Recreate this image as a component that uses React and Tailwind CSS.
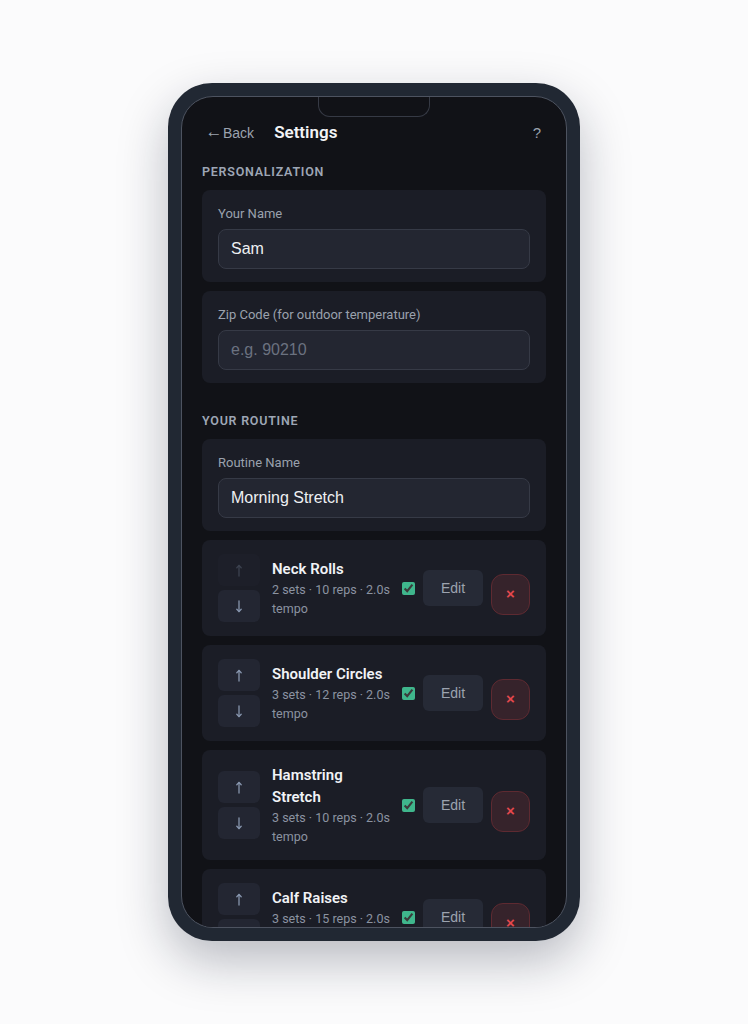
import { useState } from "react";

const exercises = [
  { id: 1, name: "Neck Rolls", sets: 2, reps: 10, tempo: "2.0" },
  { id: 2, name: "Shoulder Circles", sets: 3, reps: 12, tempo: "2.0" },
  { id: 3, name: "Hamstring Stretch", sets: 3, reps: 10, tempo: "2.0" },
  { id: 4, name: "Calf Raises", sets: 3, reps: 15, tempo: "2.0" },
];

const ArrowIcon = ({ down }) => (
  <svg width="8" height="13" viewBox="0 0 8 13" fill="none" stroke="currentColor" strokeWidth="1.3" strokeLinecap="round" strokeLinejoin="round">
    {down ? (
      <>
        <path d="M4 1v10.5" />
        <path d="M1.8 9.2 4 11.6l2.2-2.4" />
      </>
    ) : (
      <>
        <path d="M4 12V1.5" />
        <path d="M1.8 3.8 4 1.4l2.2 2.4" />
      </>
    )}
  </svg>
);

const SectionTitle = ({ children, className = "" }) => (
  <h3 className={`mb-2.5 text-[12.5px] leading-4 font-semibold uppercase tracking-[0.06em] text-[#9ea6b5] ${className}`}>
    {children}
  </h3>
);

const Field = ({ label, value, placeholder }) => (
  <div className="mb-[9px] rounded-lg bg-[#1b1d26] px-4 pt-[15px] pb-[13px]">
    <label className="mb-1.5 block text-[13px] leading-[18px] text-[#9aa1ad]">{label}</label>
    <input
      className="h-10 w-full rounded-lg border border-[#363a46] bg-[#232631] px-3 font-['Liberation_Sans',Arial,sans-serif] text-base text-[#eef0f3] placeholder:text-[#6b7280] focus:outline-none"
      type="text"
      defaultValue={value}
      placeholder={placeholder}
    />
  </div>
);

const ExerciseRow = ({ exercise, isFirst }) => {
  const [enabled, setEnabled] = useState(true);

  return (
    <div className="mb-[9px] flex items-center gap-3 rounded-lg bg-[#1b1d26] px-4 py-3.5">
      <div className="flex flex-col gap-1">
        <button
          className={`flex h-8 w-[42px] items-center justify-center rounded-md bg-[#232632] text-[#8796ae] ${isFirst ? "opacity-30" : ""}`}
          disabled={isFirst}
        >
          <ArrowIcon />
        </button>
        <button className="flex h-8 w-[42px] items-center justify-center rounded-md bg-[#232632] text-[#8796ae]">
          <ArrowIcon down />
        </button>
      </div>

      <div className="min-w-0 flex-1">
        <p className="text-[15px] leading-[22px] font-semibold text-[#f1f3f6]">{exercise.name}</p>
        <p className="text-[12.5px] leading-[19px] text-[#8b93a1]">
          {exercise.sets} sets · {exercise.reps} reps · {exercise.tempo}s tempo
        </p>
      </div>

      <div className="flex items-center gap-2">
        <input
          type="checkbox"
          className="h-[13px] w-[13px] accent-[#3fb68c]"
          checked={enabled}
          onChange={(e) => setEnabled(e.target.checked)}
        />
        <button className="h-9 w-[60px] rounded-md bg-[#262a36] font-['Liberation_Sans',Arial,sans-serif] text-[14px] text-[#9ca3af]">
          Edit
        </button>
        <button className="mt-3 flex h-[41px] w-[39px] items-center justify-center rounded-xl border border-[#5e2a31] bg-[#36232b] font-['Liberation_Sans',Arial,sans-serif] text-[15px] font-bold text-[#e5484d]">
          ×
        </button>
      </div>
    </div>
  );
};

const App = () => {
  return (
    <div className="flex min-h-screen items-center justify-center bg-[#fbfbfc] font-['Roboto',sans-serif]">
      <div className="rounded-[44px] bg-[#212833] p-[13px] shadow-[0_20px_50px_rgba(15,23,42,0.28)]">
        <div className="relative h-[832px] w-[386px] overflow-hidden rounded-[32px] border border-[#4d5360] bg-[#111217]">
          {/* notch */}
          <div className="absolute left-1/2 top-0 z-10 h-5 w-[112px] -translate-x-1/2 rounded-b-xl border border-t-0 border-[#363a45] bg-[#111217]" />

          <div className="px-5 pt-[22px]">
            {/* Header */}
            <div className="flex h-7 items-center">
              <button className="ml-[3px] flex items-center font-['Liberation_Sans',Arial,sans-serif] text-[14px] text-[#9ca3af]">
                <span className="inline-block w-[18px] -translate-y-[2px] text-[17px] leading-none">←</span>
                <span>Back</span>
              </button>
              <h1 className="ml-5 text-[17px] font-semibold text-[#f3f4f6]">Settings</h1>
              <button className="ml-auto mr-[5px] font-['Liberation_Sans',Arial,sans-serif] text-[15px] text-[#9ca3af]">
                ?
              </button>
            </div>

            <SectionTitle className="mt-[17px]">Personalization</SectionTitle>
            <Field label="Your Name" value="Sam" />
            <Field label="Zip Code (for outdoor temperature)" placeholder="e.g. 90210" />

            <SectionTitle className="mt-[30px]">Your Routine</SectionTitle>
            <Field label="Routine Name" value="Morning Stretch" />

            {exercises.map((exercise, i) => (
              <ExerciseRow key={exercise.id} exercise={exercise} isFirst={i === 0} />
            ))}
          </div>
        </div>
      </div>
    </div>
  );
};

export default App;
